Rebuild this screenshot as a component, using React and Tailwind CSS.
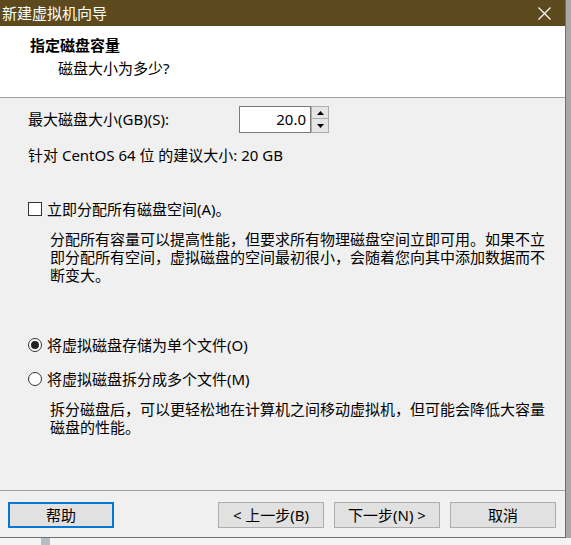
import React from "react";

const font = { fontFamily: '"Noto Sans", "Noto Sans CJK SC", sans-serif' };

function SpinBox() {
  return (
    <div className="flex h-[27px]">
      <div className="w-[72px] h-[27px] bg-white border border-[#7a7a7a] flex items-center justify-end pr-[4px] text-[15px]">
        20.0
      </div>
      <div className="w-[18px] h-[27px] flex flex-col">
        <div className="h-[13px] border border-[#adadad] bg-[#e5e5e5] flex items-center justify-center">
          <svg width="7" height="4" viewBox="0 0 7 4"><path d="M0 4 L3.5 0 L7 4 Z" fill="#000" /></svg>
        </div>
        <div className="h-[14px] border border-t-0 border-[#adadad] bg-[#e5e5e5] flex items-center justify-center">
          <svg width="7" height="4" viewBox="0 0 7 4"><path d="M0 0 L3.5 4 L7 0 Z" fill="#000" /></svg>
        </div>
      </div>
    </div>
  );
}

function Btn({ children, focused }) {
  return (
    <div
      className={
        "w-[106px] h-[26px] flex items-center justify-center text-[15px] bg-[#e1e1e1] " +
        (focused ? "border-2 border-[#0078d7]" : "border border-[#adadad]")
      }
    >
      {children}
    </div>
  );
}

export default function App() {
  return (
    <div className="w-[571px] h-[545px] flex flex-col bg-[#f4f4f4] text-black overflow-hidden" style={font}>
      <div className="flex h-[538px]">
        <div className="w-[566px] h-[538px] flex flex-col border-r border-b border-[#6f6f6f] bg-[#f0f0f0]">
          {/* title bar */}
          <div className="h-[26px] bg-[#5c4a1e] flex items-center justify-between pl-[2px] pr-[14px] text-white">
            <span className="text-[15px] leading-none">新建虚拟机向导</span>
            <svg width="13" height="13" viewBox="0 0 13 13">
              <path d="M0.5 0.5 L12.5 12.5 M12.5 0.5 L0.5 12.5" stroke="#fff" strokeWidth="1.2" />
            </svg>
          </div>
          {/* header */}
          <div className="h-[72px] bg-white border-b border-[#a0a0a0] flex flex-col pl-[30px] pt-[9px]">
            <div className="text-[15px] font-bold leading-[20px]">指定磁盘容量</div>
            <div className="text-[15px] leading-[20px] pl-[28px] mt-[3px]">磁盘大小为多少?</div>
          </div>
          {/* body */}
          <div className="flex-1 flex flex-col pl-[28px] pt-[8px]">
            <div className="flex items-center h-[27px]">
              <span className="w-[211px] text-[15px]">最大磁盘大小(GB)(S):</span>
              <SpinBox />
            </div>
            <div className="text-[15px] leading-[20px] mt-[12px]">针对 CentOS 64 位 的建议大小: 20 GB</div>
            <div className="flex items-center mt-[34px] h-[20px]">
              <div className="w-[14px] h-[14px] border border-[#333] bg-white" />
              <span className="ml-[5px] text-[15px]">立即分配所有磁盘空间(A)。</span>
            </div>
            <div className="ml-[22px] mr-[14px] mt-[11px] text-[15px] leading-[18px]">
              分配所有容量可以提高性能，但要求所有物理磁盘空间立即可用。如果不立即分配所有空间，虚拟磁盘的空间最初很小，会随着您向其中添加数据而不断变大。
            </div>
            <div className="flex items-center mt-[51px] h-[20px]">
              <div className="w-[14px] h-[14px] rounded-full border border-[#333] bg-white flex items-center justify-center">
                <div className="w-[8px] h-[8px] rounded-full bg-[#222]" />
              </div>
              <span className="ml-[5px] text-[15px]">将虚拟磁盘存储为单个文件(O)</span>
            </div>
            <div className="flex items-center mt-[14px] h-[20px]">
              <div className="w-[14px] h-[14px] rounded-full border border-[#333] bg-white" />
              <span className="ml-[5px] text-[15px]">将虚拟磁盘拆分成多个文件(M)</span>
            </div>
            <div className="ml-[22px] mr-[14px] mt-[11px] text-[15px] leading-[18px]">
              拆分磁盘后，可以更轻松地在计算机之间移动虚拟机，但可能会降低大容量磁盘的性能。
            </div>
          </div>
          {/* footer */}
          <div className="h-[47px] border-t border-[#a0a0a0] flex items-start pt-[11px] pl-[8px]">
            <Btn focused>帮助</Btn>
            <div className="ml-[104px] flex gap-[10px]">
              <Btn>&lt; 上一步(B)</Btn>
              <Btn>下一步(N) &gt;</Btn>
              <Btn>取消</Btn>
            </div>
          </div>
        </div>
        <div className="flex-1 bg-[#a8a8a8]" />
      </div>
      <div className="flex-1 flex">
        <div className="ml-[41px] w-[9px] bg-[#b8bcc8]" />
      </div>
    </div>
  );
}
